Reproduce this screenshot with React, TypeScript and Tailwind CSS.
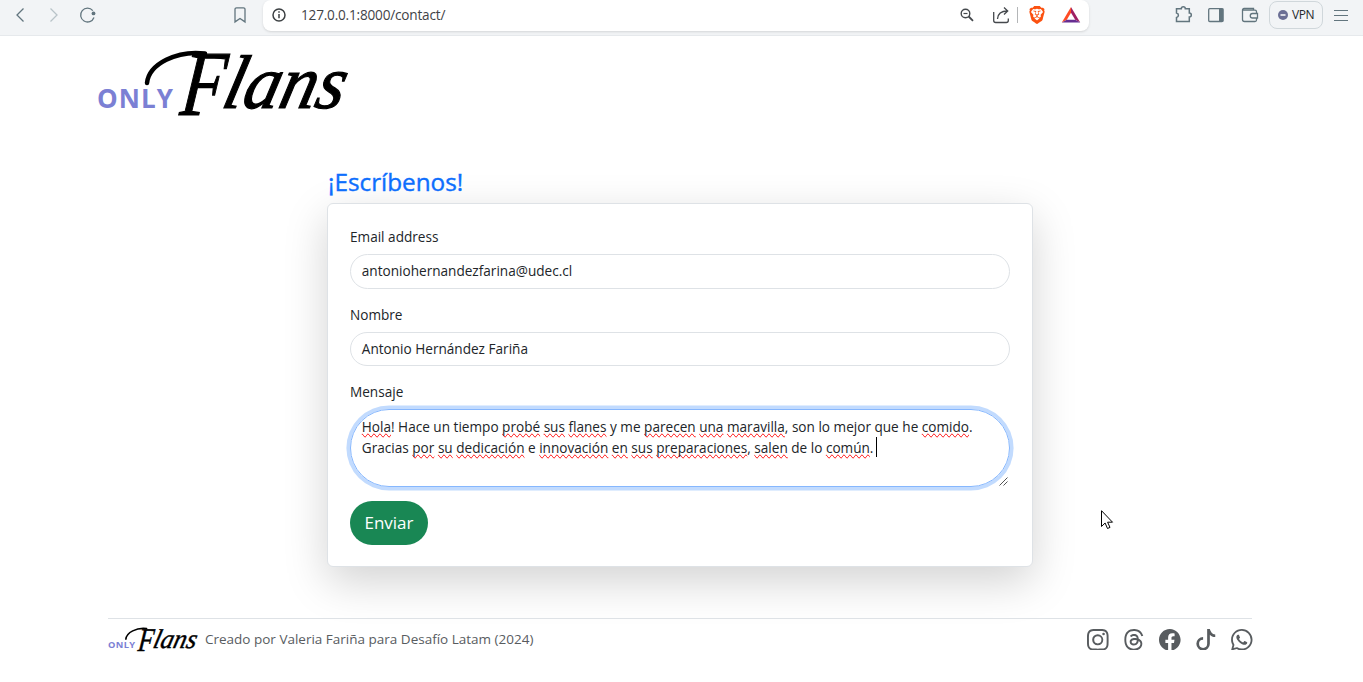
import type { ReactNode } from 'react';
import { BsInstagram, BsThreads, BsFacebook, BsTiktok, BsWhatsapp } from 'react-icons/bs';
import { SiBrave } from 'react-icons/si';

function Toolbar() {
  return (
    <header className="flex h-9 shrink-0 items-start border-b border-[#e6e9ec] bg-[#f2f4f6] text-[#62757e]">
      <svg className="ml-3 h-[30px] w-4" viewBox="12 0 16 30" fill="none" stroke="currentColor" strokeWidth="1.3">
        <path d="M23.5 8.5 17 15l6.500 6.500" />
      </svg>
      <svg className="ml-4 h-[30px] w-5 text-[#b9c3c8]" viewBox="44 0 20 30" fill="none" stroke="currentColor" strokeWidth="1.300">
        <path d="m50.500 8.500 6.500 6.500-6.500 6.500" />
      </svg>
      <svg className="ml-3 h-[30px] w-6" viewBox="76 0 24 30" fill="none" stroke="currentColor" strokeWidth="1.3">
        <path d="M92.800 10.600A6.900 6.900 0 1 0 94 17.500" />
        <circle cx="93.500" cy="13.400" r="1.900" fill="currentColor" stroke="none" />
      </svg>
      <svg className="ml-[130px] h-[30px] w-5" viewBox="230 0 20 30" fill="none" stroke="currentColor" strokeWidth="1.3">
        <path d="M236.500 7.800h7a1.500 1.500 0 0 1 1.500 1.500v12.600l-5-3.400-5 3.400V9.300a1.500 1.500 0 0 1 1.500-1.500z" />
      </svg>
      <div className="ml-[13px] flex h-[31px] w-[826px] items-start rounded-lg bg-white shadow-sm">
        <svg className="ml-2 h-[30px] w-4" viewBox="271 0 16 30" fill="none" stroke="#3c4043" strokeWidth="1.500">
          <circle cx="279" cy="15" r="6" />
          <path d="M279 14v4.200M279 11.200v1.600" />
        </svg>
        <span className="ml-[14px] text-[13.600px] leading-[30px] tracking-[-0.200px] text-[#3f4347]">127.0.0.1:8000/contact/</span>
        <svg className="ml-auto h-[30px] w-[60px]" viewBox="960 0 60 30" fill="none" stroke="#45494d" strokeWidth="1.400">
          <circle cx="965.500" cy="13.500" r="4.300" />
          <path d="M963.500 13.500h4" strokeWidth="1.200" />
          <path d="m968.700 16.500 4.300 4.300" strokeWidth="1.800" />
          <path d="M993.700 12v8.500a2 2 0 0 0 2 2h10.600a2 2 0 0 0 2-2v-2M997.500 19c.3-5.500 3.500-8 10-8M1004 7.500l3.700 3.500-3.700 3.500" strokeWidth="1.300" />
          <path d="M1017.500 7v16" stroke="#b4b6b8" strokeWidth="1" />
        </svg>
        <SiBrave className="mt-[6px] ml-2 h-[18px] w-[18px] text-[#fb5110]" />
        <svg className="mr-[8px] ml-[15px] h-[30px] w-5" viewBox="1061 0 20 30">
          <path d="M1071 7 1061.800 22.500l5-2.800 4.200-7z" fill="#ff4b24" />
          <path d="m1071 7 9.200 15.500-5-2.800-4.200-7z" fill="#9e1f63" />
          <path d="M1061.800 22.500h18.400l-5-2.800h-8.400z" fill="#662d91" />
        </svg>
      </div>
      <svg className="ml-[82px] h-[30px] w-[92px]" viewBox="1171 0 92 30" fill="none" stroke="currentColor" strokeWidth="1.300">
        <path d="M1176.500 8.700h4.800a2 2 0 0 1 4 0h4v4.200a2 2 0 0 1 0 4v4.600h-12.800v-3.900a2.400 2.400 0 0 0 0-4.700z" strokeWidth="1.500" />
        <rect x="1208.700" y="8.700" width="14.200" height="12.800" rx="1" />
        <path d="M1219 8.500h4.500v13h-4.500z" fill="currentColor" stroke="none" />
        <path d="M1256.500 13v-1.300a1.500 1.500 0 0 0-1.500-1.500h-12m13.500 8.300v1.500a1.500 1.500 0 0 1-1.500 1.500h-10.500a2 2 0 0 1-2-2V10a1.500 1.500 0 0 1 1.500-1.500h9.500v1.500M1257.500 13.500v4.500h-5a2.250 2.250 0 0 1 0-4.500z" />
      </svg>
      <div className="mt-px ml-[6px] flex h-7 w-[54px] items-center justify-center gap-[4px] rounded-lg border border-[#d0d7db] text-[12px] text-[#24282c]">
        <svg className="size-[10px]" viewBox="0 0 10 10">
          <circle cx="5" cy="5" r="5" fill="#6b6f95" />
          <path d="M2.500 5h5" stroke="#fff" strokeWidth="1.500" />
        </svg>
        <span className="tracking-[-0.400px]">VPN</span>
      </div>
      <svg className="ml-[11px] h-[30px] w-[14px]" viewBox="1334 0 14 30" stroke="currentColor" strokeWidth="1">
        <path d="M1334 10.500h14M1334 15.500h14M1334 20.500h14" />
      </svg>
    </header>
  );
}

function Logo({ className }: { className: string }) {
  return (
    <svg className={className} viewBox="0 0 252 68" overflow="visible" role="img" aria-label="Only Flans">
      <text x="0" y="58" fontSize="26" fontWeight="700" fill="#7b80d4" textLength="76" className="font-['Open_Sans']">ONLY</text>
      <path d="M50 33C52 14 80 0 108 3.500" fill="none" stroke="#000" strokeWidth="4.500" strokeLinecap="round" />
      <g stroke="#000" strokeWidth="1.200" className="font-['Liberation_Serif'] italic">
        <text transform="translate(82 65) skewX(-6)" fontSize="93" textLength="44" lengthAdjust="spacingAndGlyphs">F</text>
        <text transform="translate(123 58) skewX(-14)" fontSize="76" textLength="121" lengthAdjust="spacingAndGlyphs">lans</text>
      </g>
    </svg>
  );
}

function Misspelled({ children }: { children: ReactNode }) {
  return <span className="[text-decoration-line:spelling-error]">{children}</span>;
}

function Field({ label, value }: { label: string; value: string }) {
  return (
    <label className="block">
      <span className="block h-[22px] leading-[22px]">{label}</span>
      <span className="mt-[6px] flex h-[34.5px] items-center rounded-full border border-[#dee2e6] px-[10.800px]">{value}</span>
    </label>
  );
}

function ContactForm() {
  return (
    <main className="ml-[327px] w-[706px]">
      <h1 className="relative pl-px text-[24.300px] leading-[30px] text-[#0d6efd] [-webkit-text-stroke:0.4px_#0d6efd]">¡Escríbenos!</h1>
      <form className="mt-[6px] h-[364px] rounded-[6px] border border-[#dee2e6] bg-white px-[22px] pt-[22px] shadow-[0_14.4px_43.2px_rgba(0,0,0,0.175)]">
        <Field label="Email address" value="antoniohernandezfarina@udec.cl" />
        <div className="mt-[15px]">
          <Field label="Nombre" value="Antonio Hernández Fariña" />
        </div>
        <div className="mt-[15px] leading-[22px]">Mensaje</div>
        <div className="relative mt-[6px] h-[78px] rounded-[40px] border border-[#86b7fe] pt-[6px] pl-[10.800px] leading-[21px] whitespace-nowrap ring-[3.600px] ring-[#c2dbfe]">
          <div>
            <Misspelled>Hola</Misspelled>! Hace un tiempo <Misspelled>probé</Misspelled> <Misspelled>sus</Misspelled> <Misspelled>flanes</Misspelled> y me <Misspelled>parecen</Misspelled> <Misspelled>una</Misspelled> <Misspelled>maravilla</Misspelled>, son lo mejor que he <Misspelled>comido</Misspelled>.
          </div>
          <div className="flex items-center">
            <span>
              Gracias <Misspelled>por</Misspelled> <Misspelled>su</Misspelled> <Misspelled>dedicación</Misspelled> e <Misspelled>innovación</Misspelled> <Misspelled>en</Misspelled> <Misspelled>sus</Misspelled> <Misspelled>preparaciones</Misspelled>, <Misspelled>salen</Misspelled> de lo <Misspelled>común</Misspelled>.
            </span>
            <i className="-mt-1 -mb-0.5 ml-[3px] h-5 w-px bg-black" />
          </div>
          <svg className="absolute right-[1px] bottom-0 size-[9px]" viewBox="0 0 9 9" stroke="#555" strokeWidth="1">
            <path d="M.5 8.500 8.500.5M4.500 8.500l4-4" />
          </svg>
        </div>
        <button type="button" className="mt-[14px] h-[44px] w-[78px] rounded-full bg-[#198754] text-[17px] text-white">Enviar</button>
      </form>
    </main>
  );
}

function Footer() {
  return (
    <footer className="mt-[51px] ml-[108px] flex h-[42px] w-[1144px] items-center border-t border-[#dee2e6] text-[#585c5f]">
      <Logo className="h-[25px] w-[90px]" />
      <span className="ml-[7px] text-[13.500px]">Creado por Valeria Fariña para Desafío Latam (2024)</span>
      <div className="-mr-px ml-auto flex gap-[14.400px] text-[21.600px]">
        <BsInstagram />
        <BsThreads />
        <BsFacebook />
        <BsTiktok />
        <BsWhatsapp />
      </div>
    </footer>
  );
}

export default function App() {
  return (
    <div className="relative flex h-[682px] w-[1363px] flex-col overflow-hidden bg-white font-['Open_Sans','Noto_Sans',sans-serif] text-[13.600px] text-[#212529]">
      <Toolbar />
      <Logo className="mt-[14px] mb-[49px] ml-[97px] h-[68px] w-[252px] shrink-0" />
      <ContactForm />
      <Footer />
      <svg className="absolute top-[510px] left-[1101px] h-5 w-[13px]" viewBox="0 0 13 20" fill="#fff" stroke="#000" strokeWidth="1">
        <path d="M.5.7v15.800l3.600-3.500 2.400 5.500 2.500-1.100-2.400-5.200h4.900z" />
      </svg>
    </div>
  );
}
